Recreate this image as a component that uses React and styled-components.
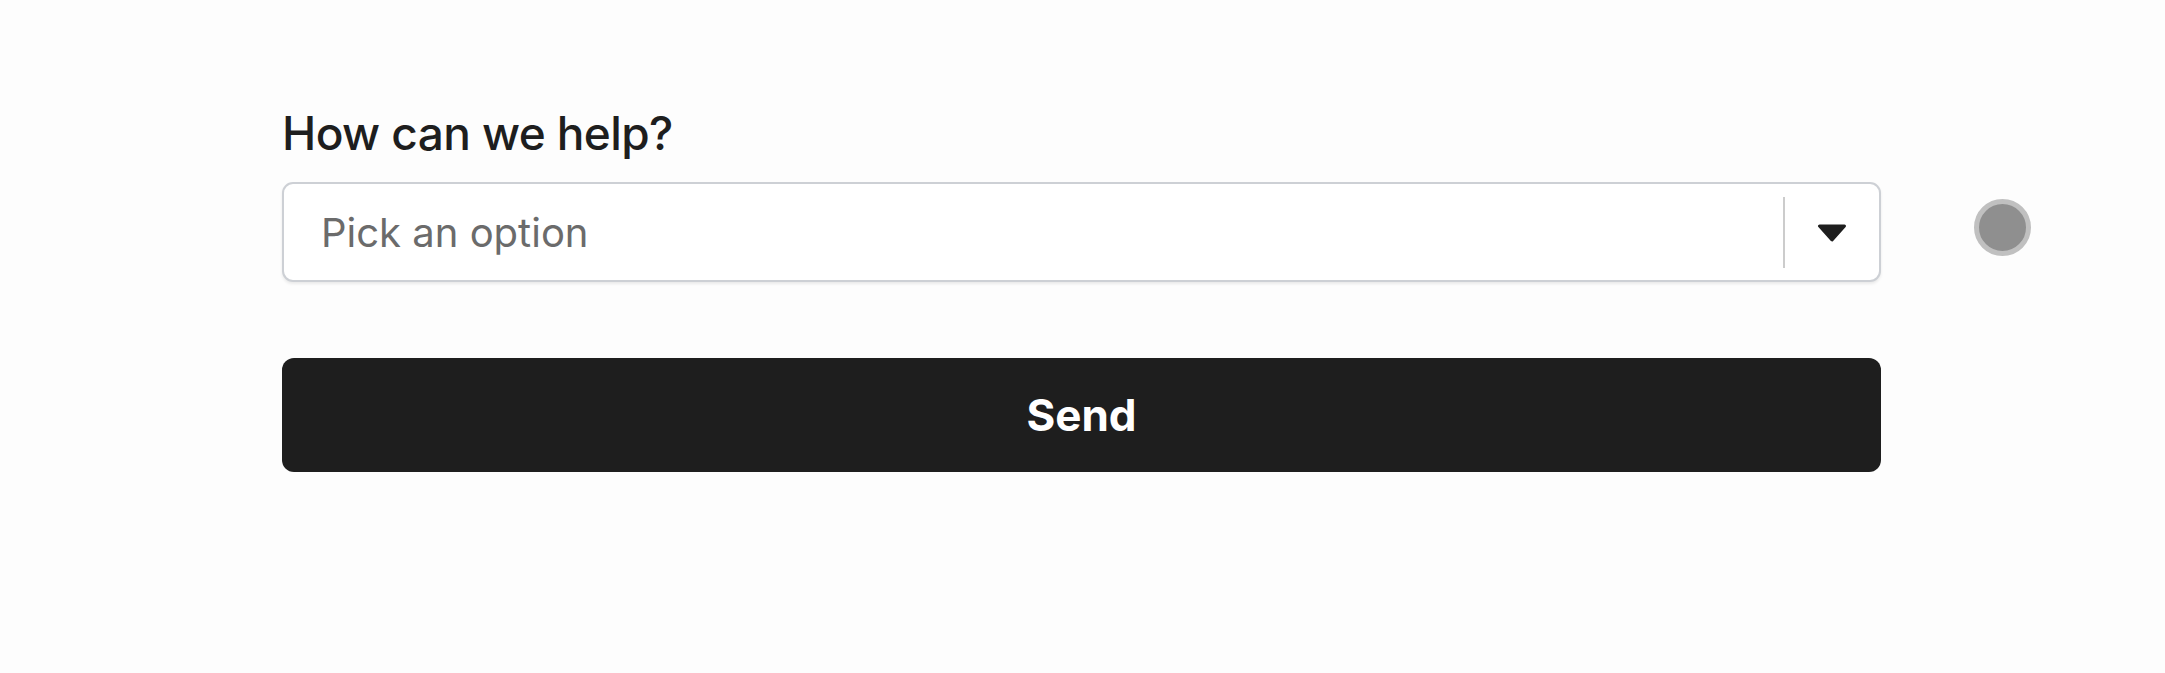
import styled, { createGlobalStyle } from 'styled-components';

const GlobalStyle = createGlobalStyle`
    html, body {
        margin: 0;
        padding: 0;
        background: #fdfdfd;
        font-family: Inter, "Noto Sans", sans-serif;
    }
`;

export default function App() {
    return (
        <>
            <GlobalStyle />
            <Page>
                <Form>
                    <Label>How can we help?</Label>
                    <FieldRow>
                        <Select>
                            <Placeholder>Pick an option</Placeholder>
                            <Separator />
                            <Indicator>
                                <svg width="30" height="18" viewBox="0 0 30 18">
                                    <path
                                        d="M2.5 2 H27.5 L15 16 Z"
                                        fill="#1e1e1e"
                                        stroke="#1e1e1e"
                                        strokeWidth="3"
                                        strokeLinejoin="round"
                                    />
                                </svg>
                            </Indicator>
                        </Select>
                        <Status />
                    </FieldRow>
                    <SendButton>Send</SendButton>
                </Form>
            </Page>
        </>
    );
}

const Page = styled.div`
    width: 2165px;
    height: 673px;
    padding: 106px 0 0 282px;
    box-sizing: border-box;
`;

const Form = styled.div`
    display: flex;
    flex-direction: column;
`;

const Label = styled.label`
    font-size: 46px;
    font-weight: 500;
    letter-spacing: -0.6px;
    line-height: 1.2;
    color: #1e1e1e;
    margin-bottom: 21px;
`;

const FieldRow = styled.div`
    display: flex;
    align-items: flex-start;
    column-gap: 93px;
`;

const Select = styled.div`
    width: 1599px;
    height: 100px;
    box-sizing: border-box;
    border: 2px solid #cdd0d5;
    border-radius: 11px;
    background: #ffffff;
    box-shadow: 0 2px 3px rgba(0, 0, 0, 0.08);
    display: flex;
    align-items: center;
`;

const Placeholder = styled.span`
    flex: 1;
    padding-left: 37px;
    font-size: 40px;
    color: #6b6b6b;
`;

const Separator = styled.span`
    width: 2px;
    height: 71px;
    background: #cccccc;
`;

const Indicator = styled.span`
    width: 94px;
    display: flex;
    justify-content: center;
    align-items: center;
    padding-top: 1px;
`;

const Status = styled.span`
    width: 57px;
    height: 57px;
    margin-top: 17px;
    box-sizing: border-box;
    border-radius: 50%;
    border: 5px solid #c0c0c0;
    background: #8f8f8f;
`;

const SendButton = styled.button`
    margin-top: 76px;
    width: 1599px;
    height: 114px;
    border: none;
    border-radius: 12px;
    background: #1e1e1e;
    color: #ffffff;
    font-family: Inter, "Noto Sans", sans-serif;
    font-size: 44px;
    font-weight: 700;
    cursor: pointer;
`;
